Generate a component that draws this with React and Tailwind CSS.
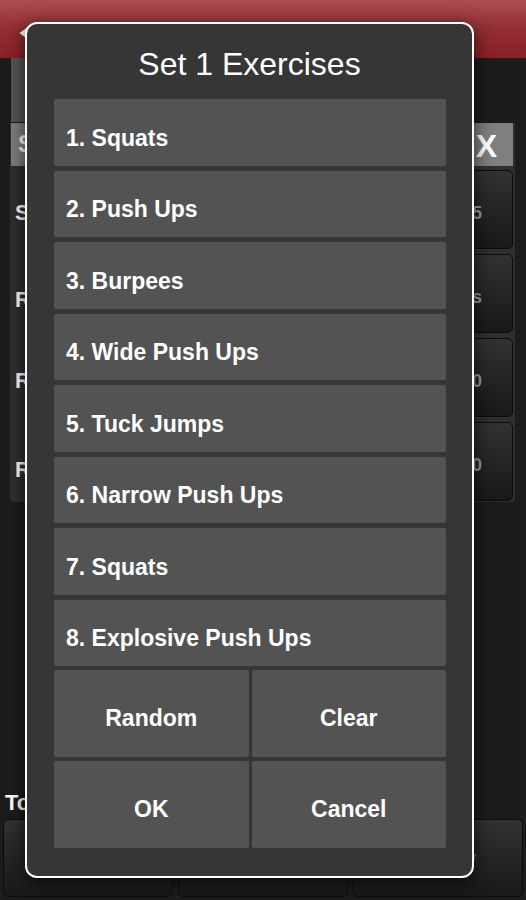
import React from "react";

const exercises = [
  "1. Squats",
  "2. Push Ups",
  "3. Burpees",
  "4. Wide Push Ups",
  "5. Tuck Jumps",
  "6. Narrow Push Ups",
  "7. Squats",
  "8. Explosive Push Ups",
];

const rows = [
  { label: "Sets", value: "5", pad: "pt-[32px]" },
  { label: "Rest", value: "45s", pad: "pt-[35px]" },
  { label: "Reps", value: "30", pad: "pt-[32px]" },
  { label: "Rnds", value: "10", pad: "pt-[37px]" },
];

function DarkButton({ children, className = "" }) {
  return (
    <div
      className={
        "rounded-[5px] border border-[#0c0c0c] bg-gradient-to-b from-[#323232] to-[#191919] " +
        className
      }
    >
      {children}
    </div>
  );
}

export default function App() {
  return (
    <div className="relative flex h-[900px] w-full flex-col overflow-hidden bg-[#1c1c1c] font-['Liberation_Sans',Arial,sans-serif] text-white">
      {/* Header */}
      <div className="flex h-[58px] shrink-0 items-start bg-gradient-to-b from-[#ab4e52] via-[#932e32] to-[#8a2125] pl-[20px] pt-[26px]">
        <svg width="14" height="14" viewBox="0 0 14 14">
          <path d="M10 1 L2 7 L10 13" stroke="white" strokeWidth="3" fill="none" />
        </svg>
      </div>

      {/* Top button */}
      <div className="ml-[11px] h-[64px] w-[240px] shrink-0 bg-[#555555]" />

      {/* Table panel */}
      <div className="ml-[10px] mr-[11px] mt-[1px] flex shrink-0 flex-col rounded-b-[4px] bg-[#2f2f2f] pb-[1px]">
        <div className="ml-[1px] mr-[2px] flex h-[43px] items-center justify-between bg-[#7f7f7f]">
          <span className="pl-[7px] text-[23px] font-bold leading-none">Set</span>
          <span className="pr-[16px] pt-[2px] text-[32px] font-bold leading-none">X</span>
        </div>
        <div className="flex flex-col gap-[5px] pt-[4px]">
          {rows.map((r) => (
            <div key={r.label} className="flex h-[79px] items-start justify-between pl-[5px] pr-[2px]">
              <span className={"text-[22px] font-bold leading-none " + r.pad}>{r.label}</span>
              <DarkButton className="flex h-[79px] w-[150px] items-center justify-end pr-[30px] pt-[8px]">
                <span className="text-[18px] font-bold text-[#9a9a9a]">{r.value}</span>
              </DarkButton>
            </div>
          ))}
        </div>
      </div>

      {/* Bottom section */}
      <div className="mt-auto flex flex-col pb-[3px]">
        <div className="pl-[5px] text-[22px] font-bold leading-none">Total Time</div>
        <div className="mt-[5px] grid grid-cols-3 gap-[5px] px-[3px]">
          <DarkButton className="h-[78px]" />
          <DarkButton className="h-[78px]" />
          <DarkButton className="flex h-[78px] items-center justify-center">
            <span className="pl-[8px] text-[20px] font-bold text-[#777]">History</span>
          </DarkButton>
        </div>
      </div>

      {/* Dialog overlay */}
      <div className="absolute left-[25px] top-[22px] flex h-[856px] w-[449px] flex-col rounded-[12px] border-2 border-white bg-[#363636] shadow-[0_4px_18px_rgba(0,0,0,0.7)]">
        <div className="flex h-[75px] shrink-0 items-center justify-center pt-[4px]">
          <span className="text-[32px] leading-none">Set 1 Exercises</span>
        </div>
        <div className="flex flex-col gap-[5px] pl-[27px] pr-[26px]">
          {exercises.map((e, i) => (
            <div
              key={i}
              className="flex h-[66.5px] items-center rounded-[2px] bg-[#535353] pl-[12px] pt-[12px] text-[23px] font-bold leading-none"
            >
              {e}
            </div>
          ))}
          <div className="mt-[-1px] grid grid-cols-2 gap-x-[3px] gap-y-[4px]">
            {["Random", "Clear", "OK", "Cancel"].map((b) => (
              <div
                key={b}
                className="flex h-[87px] items-center justify-center rounded-[2px] bg-[#535353] pt-[10px] text-[23px] font-bold leading-none"
              >
                {b}
              </div>
            ))}
          </div>
        </div>
      </div>
    </div>
  );
}
